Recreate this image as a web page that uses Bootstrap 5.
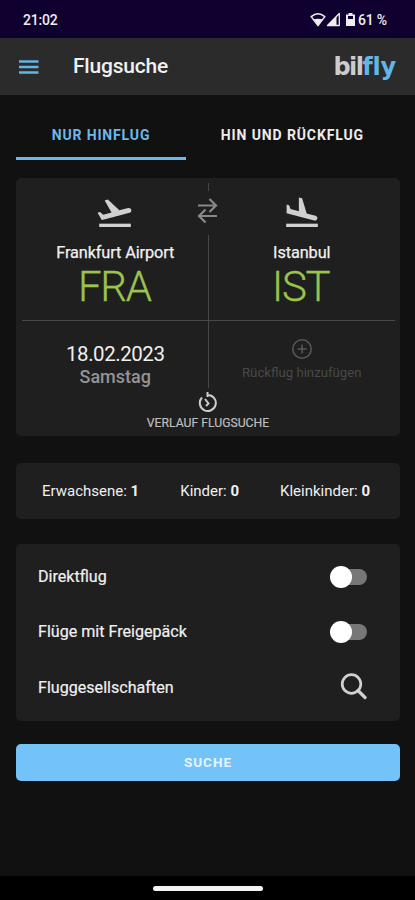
<!DOCTYPE html>
<html lang="de">
<head>
<meta charset="utf-8">
<meta name="viewport" content="width=device-width, initial-scale=1">
<title>Flugsuche</title>
<link href="https://cdn.jsdelivr.net/npm/bootstrap@5.3.0/dist/css/bootstrap.min.css" rel="stylesheet">
<style>
body{background:#111;color:#f0f0f0;font-family:Roboto,"Liberation Sans",sans-serif;font-size:16px;line-height:20px}
svg{display:block;flex:none}
.app{height:900px;width:100%;overflow:hidden}
.statusbar{height:38px;background:#10002f;padding:1px 28px 0 23px;font-size:14px;font-weight:500;color:#eee}
.clock{letter-spacing:-.2px}
.apphead{height:57px;background:#2b2b2b;padding:0 19px}
.apptitle{font-size:21px;font-weight:500;margin:-2px 0 0 34px;letter-spacing:-.2px}
.brand{font:700 24px/30px "DejaVu Sans",sans-serif;letter-spacing:-1.6px;color:#ccc;margin-right:0;font-variant-ligatures:none}
.brand span{color:#62b5e5;letter-spacing:-.2px}
.tabs{margin:0 16px;height:65px;padding-top:16px}
.tab-item{font-size:14px;font-weight:700;letter-spacing:.85px;border-bottom:3px solid transparent;width:170px;height:49px;padding-top:14px;color:#ececec;white-space:nowrap}
.tab-item.on{color:#6cb8e8;border-color:#6cb8e8}
.tab-item.off{width:auto;margin-right:35px;letter-spacing:.88px}
.panel{background:#1f1f1f;border-radius:5px;margin:0 15px 0 16px}
.route{margin-top:18px;height:258px;padding:0 5px 0 6px}
.leg{height:143px;padding-top:14px;border-bottom:1px solid #484848}
.city{font-size:16.3px;letter-spacing:-.1px;margin-top:11px;font-weight:400;-webkit-text-stroke:.25px}
.code{font-size:42px;line-height:42px;font-weight:300;color:#9bc34e;letter-spacing:-1.3px;margin:3px 2px 0 0;-webkit-text-stroke:.3px}
.dates{height:115px}
.date{font-size:20.5px;line-height:24px;padding-top:21px;letter-spacing:-.45px}
.weekday{font-size:18px;line-height:22px;font-weight:500;color:#949494}
.addback{color:#494949;font-size:13.2px;padding-top:17px;white-space:nowrap}
.addback .hint{margin-top:3px}
.midline{left:50%;top:5px;width:30px;height:205px;margin-left:-15px}
.midline i{width:1px;background:#484848}
.midline svg{margin-top:6px}
.history{left:0;right:0;top:214px;font-size:12.2px;line-height:16px;color:#bdbdbd;-webkit-text-stroke:.2px}
.history .label{margin-top:2px}
.pax{height:56px;margin-top:27px;padding:0 30px 0 26px;font-size:15px;white-space:nowrap}
.opts{height:177px;margin-top:25px;padding:5px 33px 0 22px}
.opt{height:55.5px;font-size:16.1px;-webkit-text-stroke:.2px}
.toggle{width:37px;height:22px}
.toggle .track{width:33px;height:16px;border-radius:8px;background:#777;margin:3px 0 0 4px}
.toggle .knob{width:22px;height:22px;border-radius:50%;background:#fff;left:0;top:0}
.lens{margin-top:-3px}
.btn.search{margin:23px 15px 0 16px;height:37px;background:#73c3f9;border:0;border-radius:5px;color:#e4f4ff;font-size:13.5px;font-weight:700;letter-spacing:1px;padding:0}
.gesture{height:24px;background:#000}
.gesture i{width:110px;height:5px;border-radius:3px;background:#f4f4f4}
</style>
<script src="https://cdn.jsdelivr.net/npm/bootstrap@5.3.0/dist/js/bootstrap.bundle.min.js"></script>
</head>
<body>
<div class="app d-flex flex-column">
  <div class="statusbar d-flex align-items-center">
    <span class="clock">21:02</span>
    <svg class="ms-auto" width="48" height="16" viewBox="0 0 48 16">
      <path d="M1.2 4.6Q8 -1 14.8 4.6L8 13.6Z" fill="none" stroke="#eee" stroke-width="1.500" stroke-linejoin="round"/>
      <path d="M3.600 7.300Q8 6 12.400 7.300L8 13.400Z" fill="#eee"/>
      <path d="M17.500 13.500L29.300 1.500V13.500Z" fill="none" stroke="#eee" stroke-width="1.300" stroke-linejoin="round"/>
      <path d="M17.500 13.500L26.500 4.500V13.500Z" fill="#eee"/>
      <path d="M38.500 1h4v1.500h2.500V14h-9V2.500h2.500z" fill="#eee"/><path d="M38 4h5v3h-5z" fill="#10002f"/>
    </svg>
    <span>61&#8201;%</span>
  </div>
  <header class="apphead d-flex align-items-center">
    <svg width="20" height="14" viewBox="0 0 20 14"><path d="M0 1.500h19.500M0 7h19.500M0 12.500h19.500" stroke="#62b5e5" stroke-width="2.400"/></svg>
    <div class="apptitle">Flugsuche</div>
    <div class="brand ms-auto">bil<span>fly</span></div>
  </header>
  <nav class="tabs d-flex justify-content-between">
    <div class="tab-item on text-center">NUR HINFLUG</div>
    <div class="tab-item off text-center">HIN UND RÜCKFLUG</div>
  </nav>
  <section class="panel route position-relative">
    <div class="row g-0 text-center">
      <div class="col-6 leg">
        <svg class="mx-auto" width="40" height="40" viewBox="0 0 24 24" fill="#d0d0d0"><path d="M2.500 19h19v2h-19z"/><path transform="translate(-.3 1)" d="M22.070 9.640c-.21-.8-1.040-1.280-1.840-1.060L14.920 10l-6.900-6.430-1.930.51 4.140 7.170-4.970 1.330-1.970-1.540-1.450.39 2.590 4.490s7.120-1.900 16.570-4.430c.81-.23 1.280-1.050 1.070-1.850z"/></svg>
        <div class="city">Frankfurt Airport</div>
        <div class="code">FRA</div>
      </div>
      <div class="col-6 leg">
        <svg class="mx-auto" width="40" height="40" viewBox="0 0 24 24" fill="#d0d0d0"><path d="M2.500 19h19v2h-19z"/><path transform="translate(0 1.300)" d="M19.340 15.850c.8.21 1.620-.26 1.840-1.060.21-.8-.26-1.620-1.060-1.840l-5.310-1.420-2.760-9.020L10.120 2v8.280L5.150 8.950l-.93-2.320-1.450-.39v5.170l16.570 4.440z"/></svg>
        <div class="city">Istanbul</div>
        <div class="code">IST</div>
      </div>
      <div class="col-6 dates">
        <div class="date">18.02.2023</div>
        <div class="weekday">Samstag</div>
      </div>
      <div class="col-6 dates addback">
        <svg class="mx-auto" width="22" height="22" viewBox="0 0 22 22" fill="none" stroke="#595959" stroke-width="1.500"><circle cx="11" cy="11" r="9.200"/><path d="M11 6.500v9M6.500 11h9"/></svg>
        <div class="hint">Rückflug hinzufügen</div>
      </div>
    </div>
    <div class="midline position-absolute d-flex flex-column align-items-center">
      <i style="height:8px"></i>
      <svg width="22" height="26" viewBox="0 0 22 26" fill="none" stroke="#888" stroke-width="2.200"><path d="M1 8.500h18M12.500 2l6.500 6.500-6.500 6.500M20 19H2M8.500 12.500L2 19l6.500 6.500"/></svg>
      <i class="mt-auto" style="height:153px"></i>
    </div>
    <div class="history position-absolute text-center">
      <svg class="mx-auto" width="20" height="21" viewBox="0 0 20 21" fill="none" stroke="#ccc" stroke-width="2"><path d="M9.500 3A8 8 0 1 1 4 5.500M9.500 0v5M7 7l3.500 4.500L8 14"/></svg>
      <div class="label">VERLAUF FLUGSUCHE</div>
    </div>
  </section>
  <section class="panel pax d-flex justify-content-between align-items-center">
    <span>Erwachsene: <b>1</b></span><span>Kinder: <b>0</b></span><span>Kleinkinder: <b>0</b></span>
  </section>
  <section class="panel opts">
    <div class="opt d-flex align-items-center justify-content-between"><span>Direktflug</span><div class="toggle position-relative"><div class="track"></div><div class="knob position-absolute"></div></div></div>
    <div class="opt d-flex align-items-center justify-content-between"><span>Flüge mit Freigepäck</span><div class="toggle position-relative"><div class="track"></div><div class="knob position-absolute"></div></div></div>
    <div class="opt d-flex align-items-center justify-content-between"><span>Fluggesellschaften</span>
      <svg class="lens" width="27" height="27" viewBox="0 0 27 27" fill="none" stroke="#d0d0d0"><circle cx="11.500" cy="11" r="9.300" stroke-width="2.700"/><path d="M18 17.500l7 7" stroke-width="3.200" stroke-linecap="round"/></svg></div>
  </section>
  <button class="btn search">SUCHE</button>
  <footer class="gesture mt-auto d-flex justify-content-center align-items-center"><i></i></footer>
</div>
</body>
</html>
